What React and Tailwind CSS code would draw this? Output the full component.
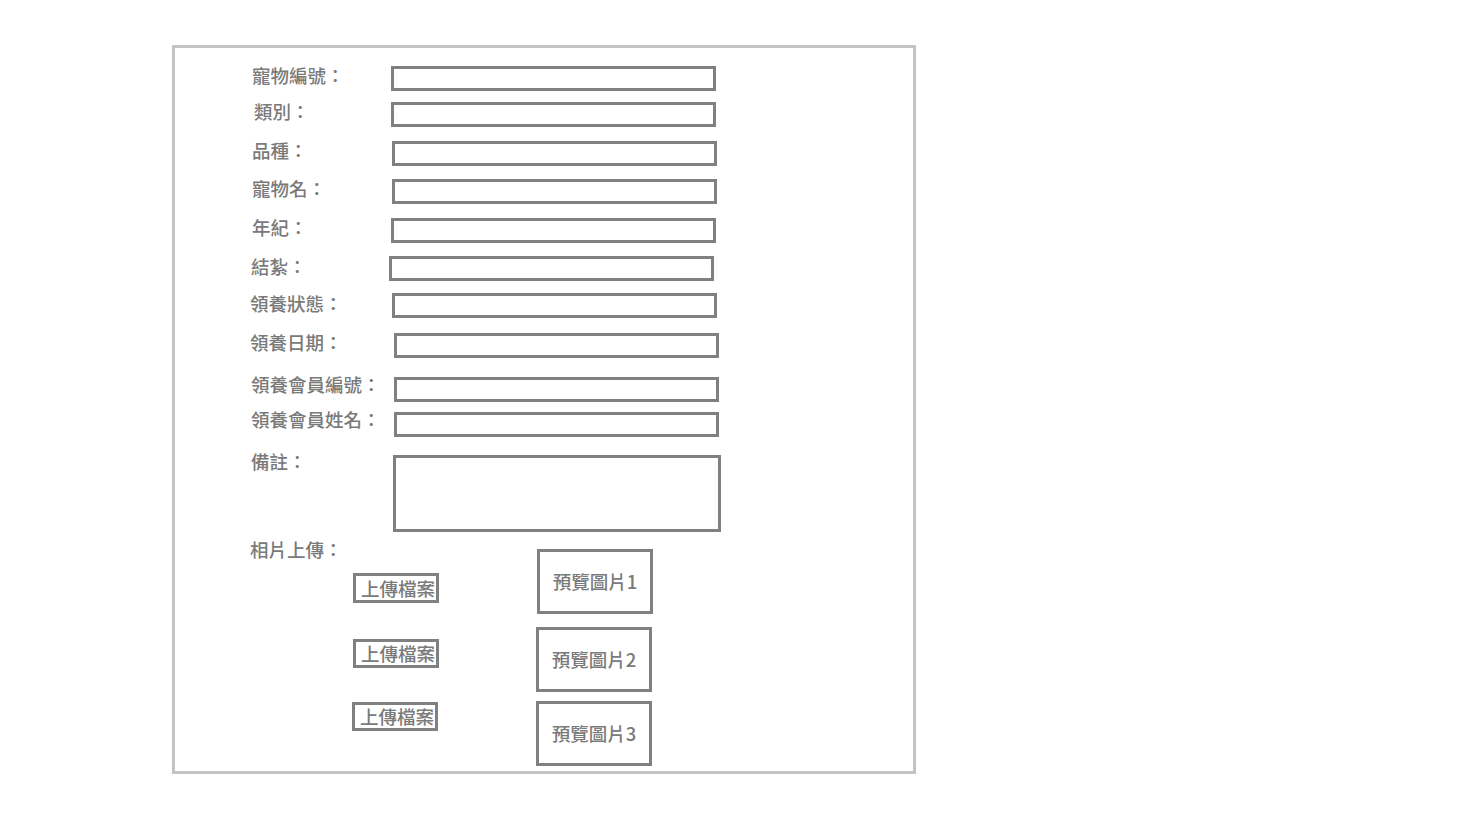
import React from 'react';

// 表單欄位（位置依原稿微調）
const fields = [
  { label: '寵物編號：', row: 'mt-[18px]', lab: 'ml-[77px] w-[139px] -mt-px' },
  { label: '類別：', row: 'mt-[11px]', lab: 'ml-[79px] w-[137px] -mt-px' },
  { label: '品種：', row: 'mt-[14px]', lab: 'ml-[77px] w-[140px] -mt-px' },
  { label: '寵物名：', row: 'mt-[13px]', lab: 'ml-[77px] w-[140px] -mt-px' },
  { label: '年紀：', row: 'mt-[14px]', lab: 'ml-[77px] w-[139px] -mt-px' },
  { label: '結紮：', row: 'mt-[13px]', lab: 'ml-[76px] w-[138px]' },
  { label: '領養狀態：', row: 'mt-[12px]', lab: 'ml-[75px] w-[142px]' },
  { label: '領養日期：', row: 'mt-[15px]', lab: 'ml-[75px] w-[144px] -mt-px' },
  { label: '領養會員編號：', row: 'mt-[19px]', lab: 'ml-[76px] w-[143px] -mt-[3px]' },
  { label: '領養會員姓名：', row: 'mt-[10px]', lab: 'ml-[76px] w-[143px] -mt-[3px]' },
];

const uploads = [
  { btn: 'mt-[14px] ml-[103px] h-[30px]', prev: 'mt-[10px]', name: '預覽圖片1' },
  { btn: 'mt-[36px] ml-[103px] h-[29px]', prev: 'mt-[13px] -ml-px', name: '預覽圖片2' },
  { btn: 'mt-[34px] ml-[102px] h-[29px]', prev: 'mt-[9px] -ml-px', name: '預覽圖片3' },
];

export default function App() {
  return (
    <div className="min-h-[814px] bg-white pt-[45px] pl-[172px] font-['Noto_Sans_CJK_TC',sans-serif] font-medium text-[18.5px] text-[#7a7a7a]">
      <div className="w-[744px] h-[729px] border-[3px] border-[#c3c3c3] flex flex-col">

        {fields.map((f) => (
          <div key={f.label} className={`flex items-start ${f.row}`}>
            <label className={`${f.lab} shrink-0 leading-[20px] whitespace-nowrap`}>{f.label}</label>
            <input type="text" className="w-[325px] h-[25px] border-[3px] border-[#808080] bg-white outline-none" />
          </div>
        ))}

        {/* 備註 */}
        <div className="flex items-start mt-[18px]">
          <label className="ml-[76px] w-[142px] -mt-[4px] shrink-0 leading-[20px]">備註：</label>
          <textarea className="w-[328px] h-[77px] border-[3px] border-[#808080] bg-white outline-none resize-none" />
        </div>

        {/* 相片上傳 */}
        <div className="flex items-start mt-[7px] ml-[75px]">
          <div className="w-[287px] shrink-0 flex flex-col items-start">
            <span className="leading-[20px] whitespace-nowrap">相片上傳：</span>
            {uploads.map((u) => (
              <button
                key={u.name}
                className={`${u.btn} w-[86px] border-[3px] border-[#808080] bg-white flex items-center pl-[5px] whitespace-nowrap leading-none text-[#7a7a7a]`}
              >
                上傳檔案
              </button>
            ))}
          </div>
          <div className="flex flex-col items-start">
            {uploads.map((u) => (
              <div
                key={u.name}
                className={`${u.prev} w-[116px] h-[65px] border-[3px] border-[#808080] flex items-center justify-center whitespace-nowrap leading-none`}
              >
                {u.name}
              </div>
            ))}
          </div>
        </div>

      </div>
    </div>
  );
}
